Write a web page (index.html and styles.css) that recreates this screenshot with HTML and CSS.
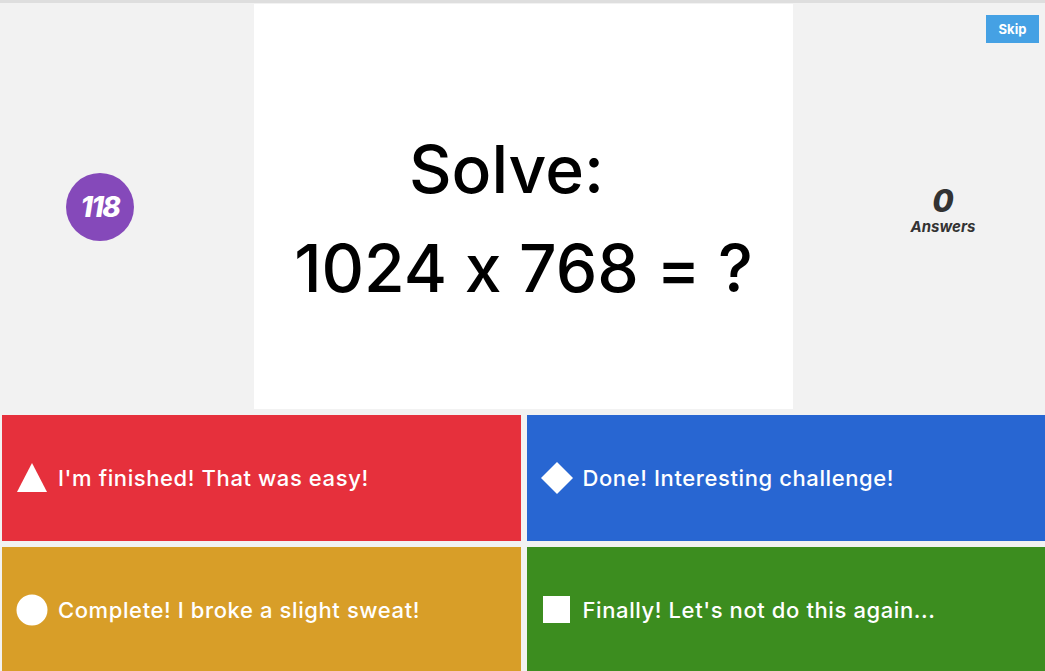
FILE: index.html
```html
<!DOCTYPE html>
<html lang="en">
<head>
    <meta charset="UTF-8">
    <meta name="viewport" content="width=device-width, initial-scale=1.0">
    <title>Quiz</title>
    <link rel="stylesheet" href="styles.css">
</head>
<body>
    <div class="stage">
        <div class="side left">
            <div class="timer">118</div>
        </div>
        <div class="question">
            <div class="line first">Solve:</div>
            <div class="line">1024 x 768 = ?</div>
        </div>
        <div class="side right">
            <button class="skip">Skip</button>
            <div class="counter">
                <div class="count">0</div>
                <div class="label">Answers</div>
            </div>
        </div>
    </div>
    <div class="answers">
        <div class="answer red">
            <span class="shape">
                <svg width="30" height="30" viewBox="0 0 30 30"><polygon points="15,0 30,29 0,29" fill="#fff"/></svg>
            </span>
            <span class="text">I'm finished! That was easy!</span>
        </div>
        <div class="answer blue">
            <span class="shape">
                <svg width="34" height="34" viewBox="0 0 34 34"><polygon points="17,1 33,17 17,33 1,17" fill="#fff"/></svg>
            </span>
            <span class="text">Done! Interesting challenge!</span>
        </div>
        <div class="answer yellow">
            <span class="shape">
                <svg width="32" height="32" viewBox="0 0 32 32"><circle cx="16" cy="16" r="15.5" fill="#fff"/></svg>
            </span>
            <span class="text">Complete! I broke a slight sweat!</span>
        </div>
        <div class="answer green">
            <span class="shape">
                <svg width="28" height="28" viewBox="0 0 28 28"><rect x="0" y="0" width="27" height="27" fill="#fff"/></svg>
            </span>
            <span class="text">Finally! Let's not do this again...</span>
        </div>
    </div>
</body>
</html>
```

FILE: styles.css
```css
body {
    margin: 0;
    height: 671px;
    overflow: hidden;
    background-color: #f2f2f2;
    border-top: 3px solid #dedede;
    box-sizing: border-box;
    font-family: "Inter", "Liberation Sans", sans-serif;
    font-feature-settings: "calt" 0;
}
.stage {
    display: grid;
    grid-template-columns: 254px 539px 1fr;
    height: 405px;
    padding-top: 1px;
}
.side {
    display: flex;
    justify-content: center;
    align-items: center;
}
.left {
    padding-right: 54px;
}
.right {
    position: relative;
    padding-left: 48px;
}
.timer {
    width: 68px;
    height: 68px;
    border-radius: 50%;
    background: #8549ba;
    color: #fff;
    font-size: 28px;
    font-weight: 800;
    font-style: italic;
    letter-spacing: -1.5px;
    display: flex;
    justify-content: center;
    align-items: center;
}
.question {
    background: #fff;
    display: flex;
    flex-direction: column;
    justify-content: center;
    align-items: center;
    color: #000;
    font-size: 66px;
    font-weight: 500;
    line-height: 99px;
    padding-top: 24px;
    box-sizing: border-box;
}
.first {
    padding-right: 34px;
}
.skip {
    position: absolute;
    top: 11px;
    right: 6px;
    width: 53px;
    height: 28px;
    border: none;
    background: #45a1e4;
    color: #fff;
    font-family: inherit;
    font-size: 13px;
    font-weight: 700;
    cursor: pointer;
}
.counter {
    text-align: center;
    color: #333;
    font-style: italic;
    font-weight: 800;
    margin-top: 8px;
}
.count {
    font-size: 31px;
    line-height: 32px;
}
.label {
    font-size: 15px;
    line-height: 20px;
    font-weight: 700;
}
.answers {
    display: grid;
    grid-template-columns: 1fr 1fr;
    grid-auto-rows: 126px;
    gap: 6px;
    padding: 6px 0 0 2px;
}
.answer {
    display: flex;
    align-items: center;
    gap: 9px;
    padding-left: 13px;
    color: #fff;
    font-size: 22px;
    font-weight: 500;
    letter-spacing: 0.6px;
    cursor: pointer;
}
.shape {
    width: 34px;
    display: flex;
    justify-content: center;
    align-items: center;
}
.red { background: #e6303c; }
.blue { background: #2866d2; }
.yellow { background: #d89e28; }
.green { background: #3c8d1f; }
```
